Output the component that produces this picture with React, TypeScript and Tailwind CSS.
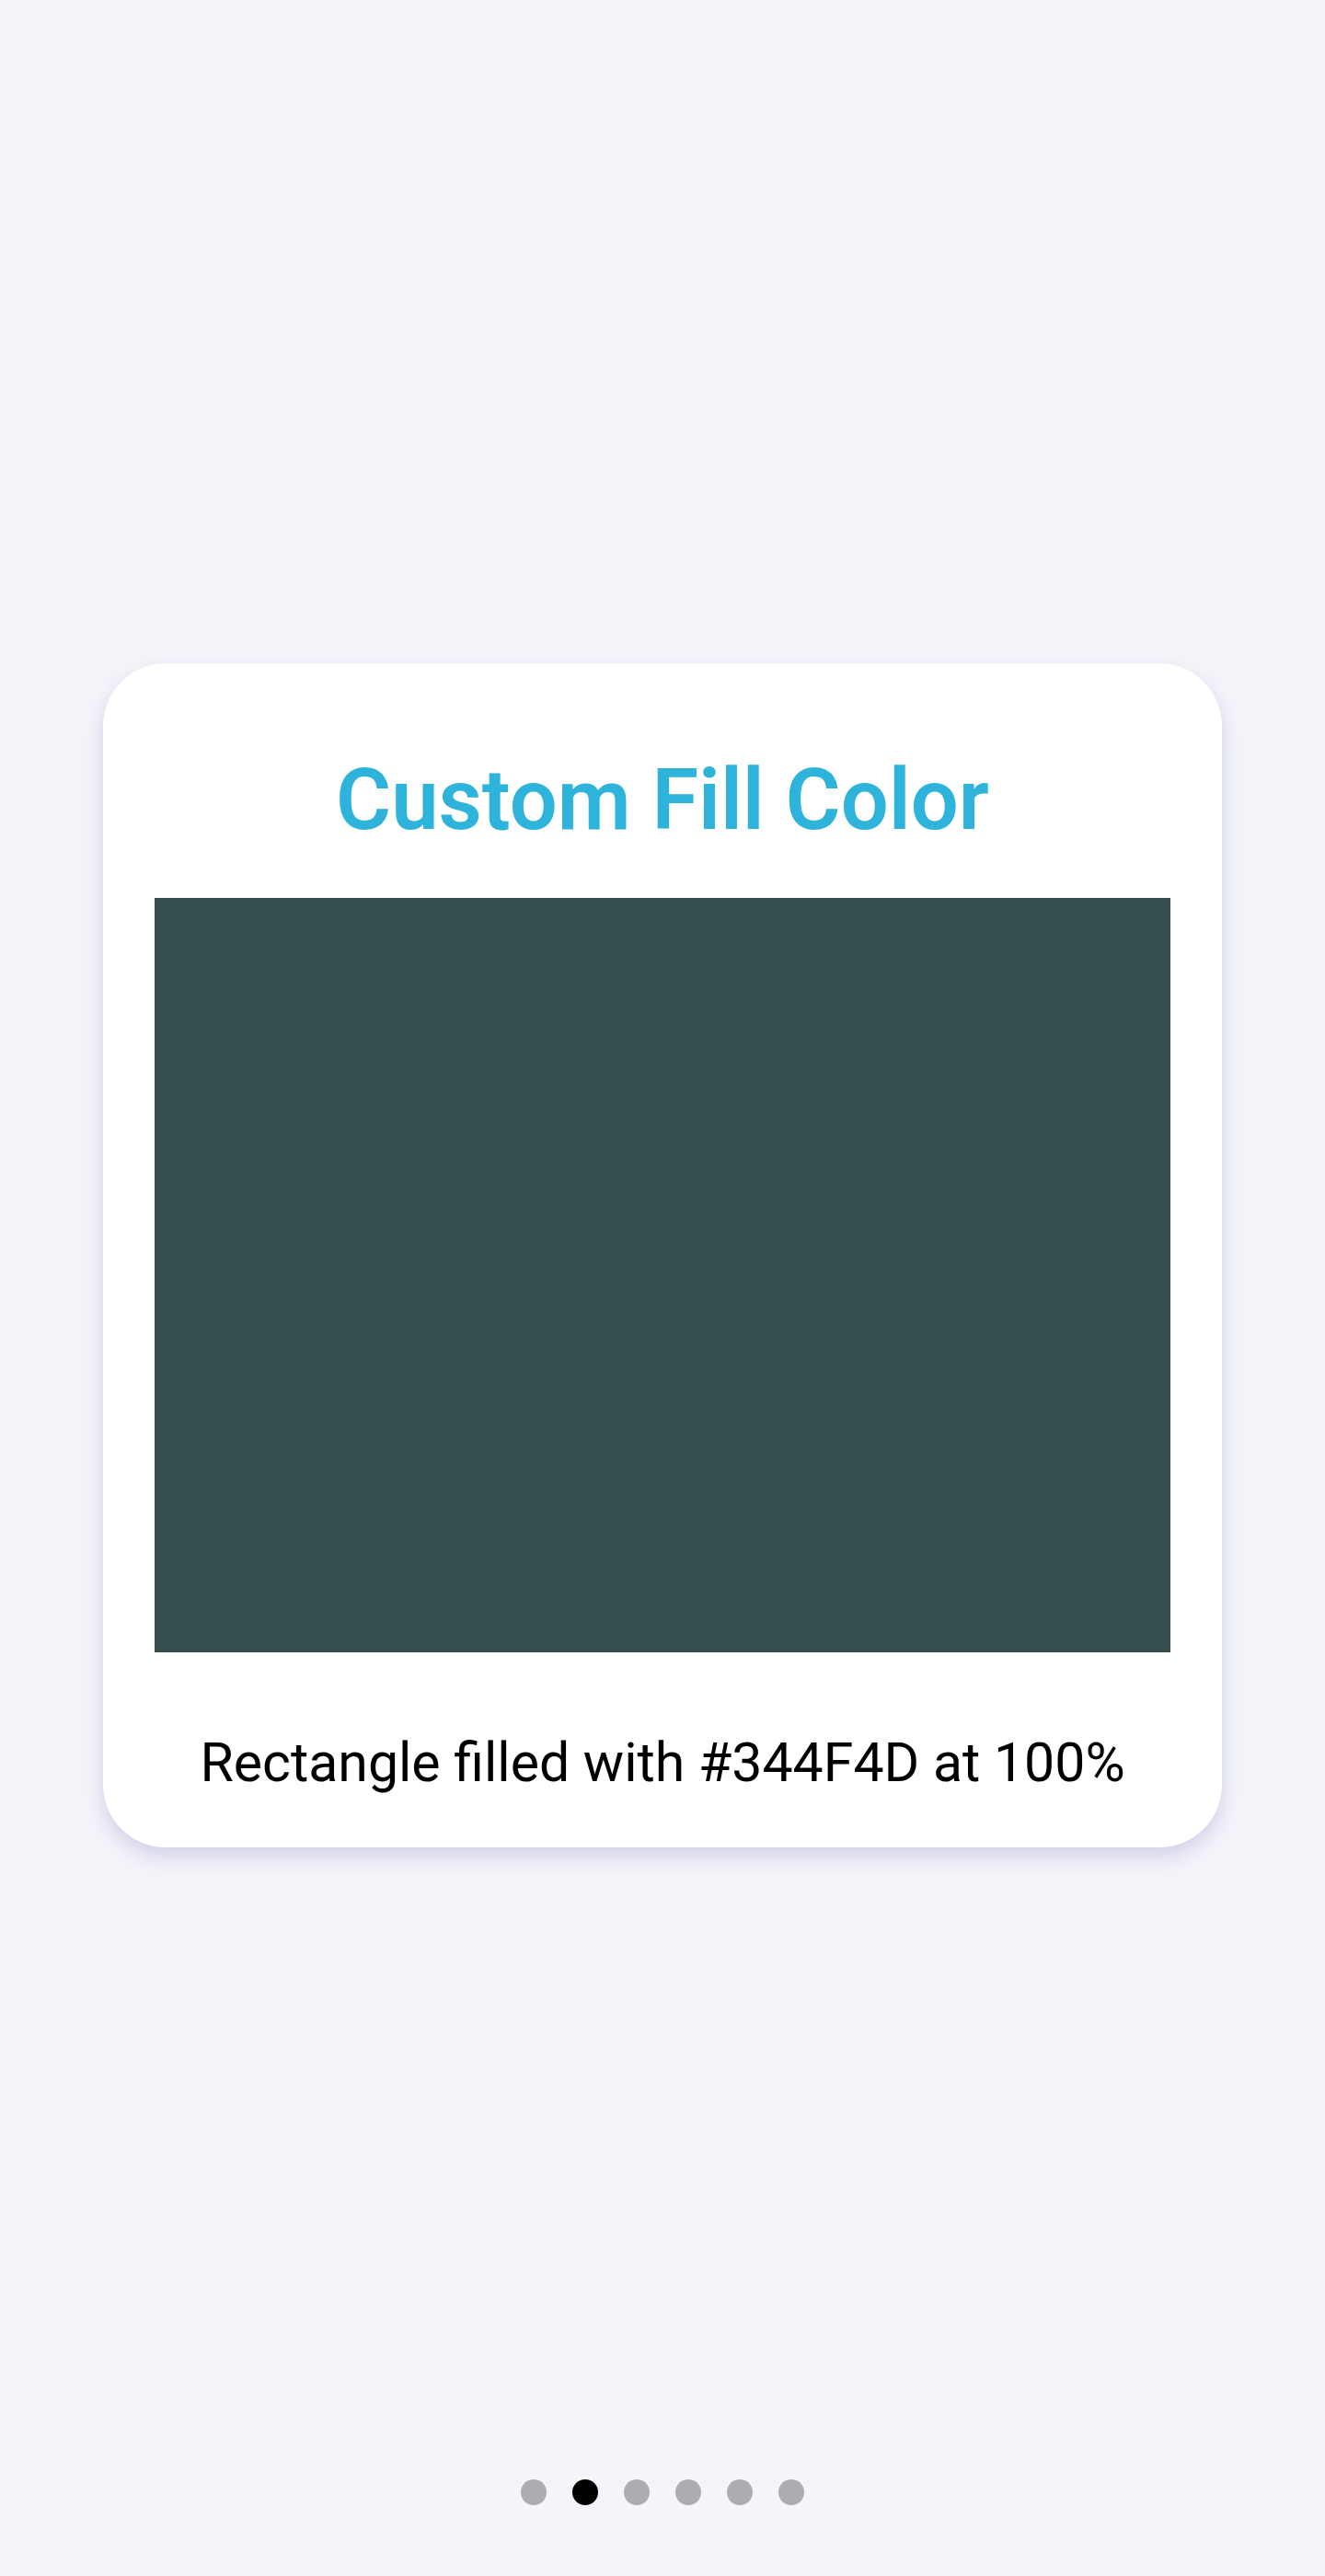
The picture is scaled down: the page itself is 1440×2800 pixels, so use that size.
import React from 'react';

const dots = [0, 1, 2, 3, 4, 5];
const activeDot = 1;

const App: React.FC = () => {
  return (
    <div
      className="min-h-[2800px] w-full bg-[#f4f5fa] flex flex-col items-center"
      style={{ fontFamily: 'Roboto, "Noto Sans", sans-serif' }}
    >
      {/* Tarjeta */}
      <div className="mt-[721px] w-[1216px] bg-white rounded-[68px] shadow-[0_10px_22px_rgba(120,112,190,0.28)] flex flex-col items-center pt-[103px] pb-[61px]">
        <h1 className="text-[92px] leading-[92px] font-semibold text-[#2eb4da]">
          Custom Fill Color
        </h1>
        <div className="mt-[60px] w-[1104px] h-[820px] bg-[#344F4D]" />
        <p className="mt-[89px] text-[59px] leading-[62px] text-black">
          Rectangle filled with #344F4D at 100%
        </p>
      </div>

      {/* Indicadores */}
      <div className="mt-auto mb-[77px] flex items-center gap-[28px]">
        {dots.map((d) => (
          <div
            key={d}
            className={
              d === activeDot
                ? 'w-[28px] h-[28px] rounded-full bg-black'
                : 'w-[28px] h-[28px] rounded-full bg-[#acacb1]'
            }
          />
        ))}
      </div>
    </div>
  );
};

export default App;
